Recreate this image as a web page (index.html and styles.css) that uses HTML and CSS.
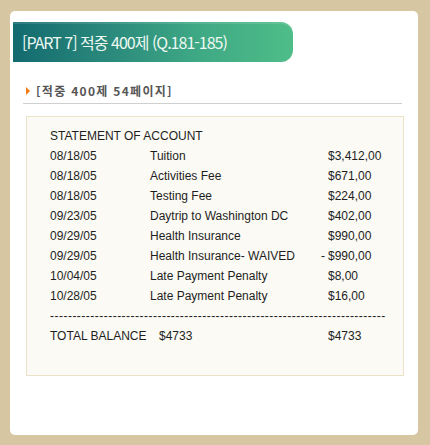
FILE: index.html
```html
<!DOCTYPE html>
<html lang="ko">
<head>
<meta charset="utf-8">
<title>적중 400제</title>
<link rel="stylesheet" href="styles.css">
</head>
<body>
<div class="card">
  <div class="banner">[PART 7] 적중 400제 (Q.181-185)</div>
  <div class="sub">
    <span class="tri"></span>
    <span class="subtitle">[적중 400제 54페이지]</span>
  </div>
  <div class="box">
    <div class="head">STATEMENT OF ACCOUNT</div>
    <div class="rows">
      <span>08/18/05</span><span>Tuition</span><span>$3,412,00</span>
      <span>08/18/05</span><span>Activities Fee</span><span>$671,00</span>
      <span>08/18/05</span><span>Testing Fee</span><span>$224,00</span>
      <span>09/23/05</span><span>Daytrip to Washington DC</span><span>$402,00</span>
      <span>09/29/05</span><span>Health Insurance</span><span>$990,00</span>
      <span>09/29/05</span><span>Health Insurance- WAIVED</span><span><span class="neg">-</span>$990,00</span>
      <span>10/04/05</span><span>Late Payment Penalty</span><span>$8,00</span>
      <span>10/28/05</span><span>Late Payment Penalty</span><span>$16,00</span>
    </div>
    <div class="dashes">---------------------------------------------------------------------------</div>
    <div class="total">
      <span class="tlabel">TOTAL BALANCE</span><span class="tval">$4733</span><span class="tamt">$4733</span>
    </div>
  </div>
</div>
</body>
</html>
```

FILE: styles.css
```css
html, body {
  margin: 0;
  padding: 0;
}
body {
  background: #d6c7a2;
  width: 430px;
  height: 445px;
  overflow: hidden;
  padding-top: 11px;
  padding-left: 10px;
  box-sizing: border-box;
}
.card {
  width: 408px;
  height: 424px;
  background: #ffffff;
  border-radius: 5px;
  padding-top: 11px;
  box-sizing: border-box;
}
.banner {
  margin-left: 3px;
  width: 280px;
  height: 40px;
  border-radius: 0 12px 12px 0;
  background: linear-gradient(90deg, #136a6f 0%, #2b8a7c 35%, #3ea884 65%, #4fbd88 100%);
  box-shadow: inset 0 2px 0 rgba(255,255,255,0.12);
  color: #eef8f2;
  font-family: "Noto Sans CJK KR", "Noto Sans", sans-serif;
  font-size: 16px;
  letter-spacing: -1px;
  line-height: 40px;
  padding-left: 9px;
  box-sizing: border-box;
  white-space: nowrap;
}
.sub {
  margin-left: 13px;
  width: 379px;
  height: 42px;
  border-bottom: 1px solid #cfcfcf;
  display: flex;
  align-items: center;
  padding-top: 16px;
  box-sizing: border-box;
}
.tri {
  width: 0;
  height: 0;
  border-top: 4px solid transparent;
  border-bottom: 4px solid transparent;
  border-left: 4px solid #f07a12;
  margin-left: 3px;
  margin-right: 6px;
}
.subtitle {
  font-family: "Noto Sans CJK KR", "DejaVu Sans", sans-serif;
  font-weight: bold;
  font-size: 12px;
  color: #555555;
  letter-spacing: 1.3px;
}
.box {
  margin-left: 16px;
  margin-top: 12px;
  width: 378px;
  height: 260px;
  background: #fbfaf4;
  border: 1px solid #ebe2c8;
  box-sizing: border-box;
  padding: 9px 0 0 23px;
  font-family: "Liberation Sans", Arial, sans-serif;
  font-size: 12px;
  line-height: 20px;
  color: #1e1e1e;
}
.rows {
  display: grid;
  grid-template-columns: 100px 178px auto;
}
.neg {
  display: inline-block;
  margin-left: -7px;
  width: 7px;
}
.dashes {
  width: 345px;
  white-space: nowrap;
  letter-spacing: 0.48px;
}
.total {
  display: grid;
  grid-template-columns: 109px 169px auto;
}
```
